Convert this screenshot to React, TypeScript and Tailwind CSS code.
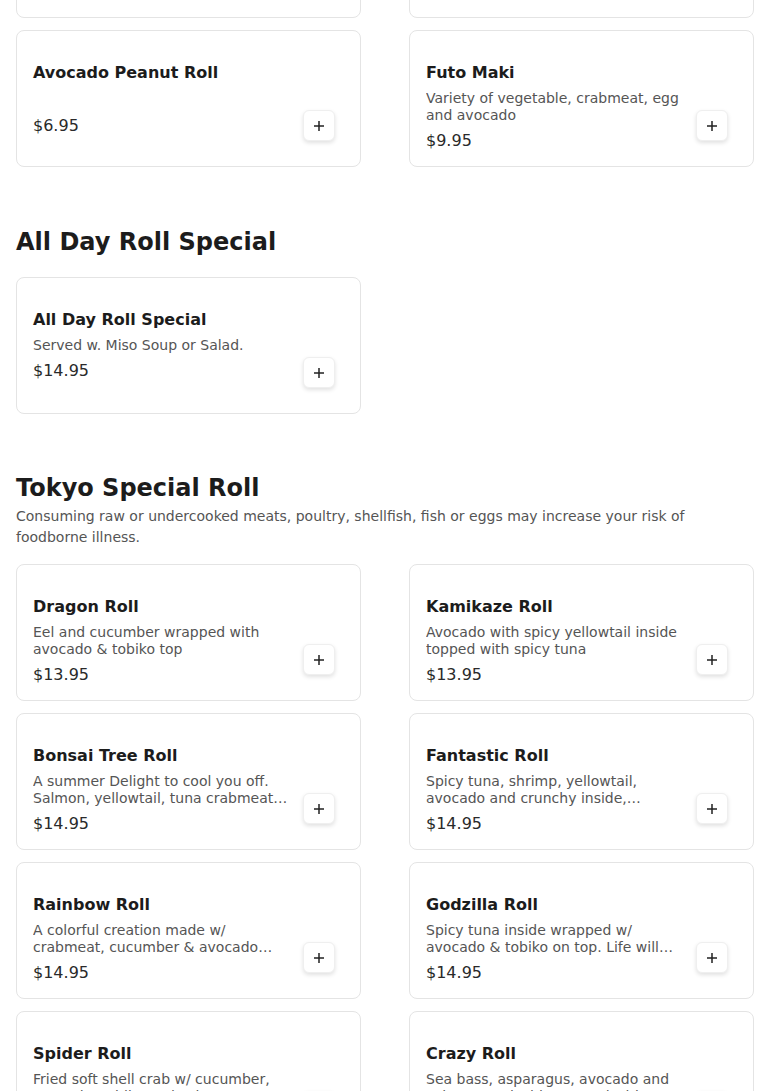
import React from "react";

type Item = { name: string; desc?: string; price: string };

function PlusButton() {
  return (
    <button
      type="button"
      className="flex h-[31px] w-8 items-center justify-center rounded-md border border-[#efefef] bg-white shadow-[0_2px_4px_rgba(0,0,0,0.12)]"
    >
      <svg width="12" height="12" viewBox="0 0 12 12" fill="none">
        <path d="M6 1v10M1 6h10" stroke="#222" strokeWidth="1.5" />
      </svg>
    </button>
  );
}

function Card({ item }: { item: Item }) {
  return (
    <div className="flex h-[137px] rounded-lg border border-[#e4e4e4] bg-white pl-4 pr-[25px]">
      <div className="min-w-0 flex-1 pt-[30px]">
        <h3 className="text-base font-bold leading-6 text-[#1c1c1c]">{item.name}</h3>
        {item.desc ? (
          <p className="mt-[5px] line-clamp-2 text-sm leading-[17px] text-[#555555]">{item.desc}</p>
        ) : null}
        <p className={`${item.desc ? "mt-[5px]" : "mt-[29px]"} text-base leading-6 text-[#2a2a2a]`}>{item.price}</p>
      </div>
      <div className="ml-3 mt-[79px] self-start">
        <PlusButton />
      </div>
    </div>
  );
}

function Grid({ items, className = "" }: { items: Item[]; className?: string }) {
  return (
    <div className={`grid grid-cols-2 gap-x-12 gap-y-3 ${className}`}>
      {items.map((it, i) => (
        <Card key={i} item={it} />
      ))}
    </div>
  );
}

const first: Item[] = [
  { name: "Cucumber Roll", price: "$5.95" },
  { name: "Sweet Potato Roll", price: "$6.95" },
  { name: "Avocado Peanut Roll", price: "$6.95" },
  { name: "Futo Maki", desc: "Variety of vegetable, crabmeat, egg and avocado", price: "$9.95" },
];

const allDay: Item[] = [
  { name: "All Day Roll Special", desc: "Served w. Miso Soup or Salad.", price: "$14.95" },
];

const tokyo: Item[] = [
  { name: "Dragon Roll", desc: "Eel and cucumber wrapped with avocado & tobiko top", price: "$13.95" },
  { name: "Kamikaze Roll", desc: "Avocado with spicy yellowtail inside topped with spicy tuna", price: "$13.95" },
  {
    name: "Bonsai Tree Roll",
    desc: "A summer Delight to cool you off. Salmon, yellowtail, tuna crabmeat and avocado wrapped in cucumber",
    price: "$14.95",
  },
  {
    name: "Fantastic Roll",
    desc: "Spicy tuna, shrimp, yellowtail, avocado and crunchy inside,…",
    price: "$14.95",
  },
  {
    name: "Rainbow Roll",
    desc: "A colorful creation made w/ crabmeat, cucumber & avocado inside topped with assorted fish",
    price: "$14.95",
  },
  {
    name: "Godzilla Roll",
    desc: "Spicy tuna inside wrapped w/ avocado & tobiko on top. Life will never be the same",
    price: "$14.95",
  },
  {
    name: "Spider Roll",
    desc: "Fried soft shell crab w/ cucumber, avocado, tobiko and spicy mayo sauce on top",
    price: "$14.95",
  },
  {
    name: "Crazy Roll",
    desc: "Sea bass, asparagus, avocado and spicy mayo inside, topped with tuna and tobiko",
    price: "$14.95",
  },
];

export default function App() {
  return (
    <div className="min-h-screen bg-white px-4 pb-10 font-['DejaVu_Sans',sans-serif]">
      <Grid items={first} className="-mt-[119px]" />

      <h2 className="mt-[59px] text-2xl font-bold leading-8 text-[#1c1c1c]">All Day Roll Special</h2>
      <Grid items={allDay} className="mt-[19px]" />

      <h2 className="mt-[58px] text-2xl font-bold leading-8 text-[#1c1c1c]">Tokyo Special Roll</h2>
      <p className="mt-[2px] pr-16 text-sm leading-[21px] text-[#555555]">
        Consuming raw or undercooked meats, poultry, shellfish, fish or eggs may increase your risk of foodborne
        illness.
      </p>
      <Grid items={tokyo} className="mt-4" />
    </div>
  );
}
